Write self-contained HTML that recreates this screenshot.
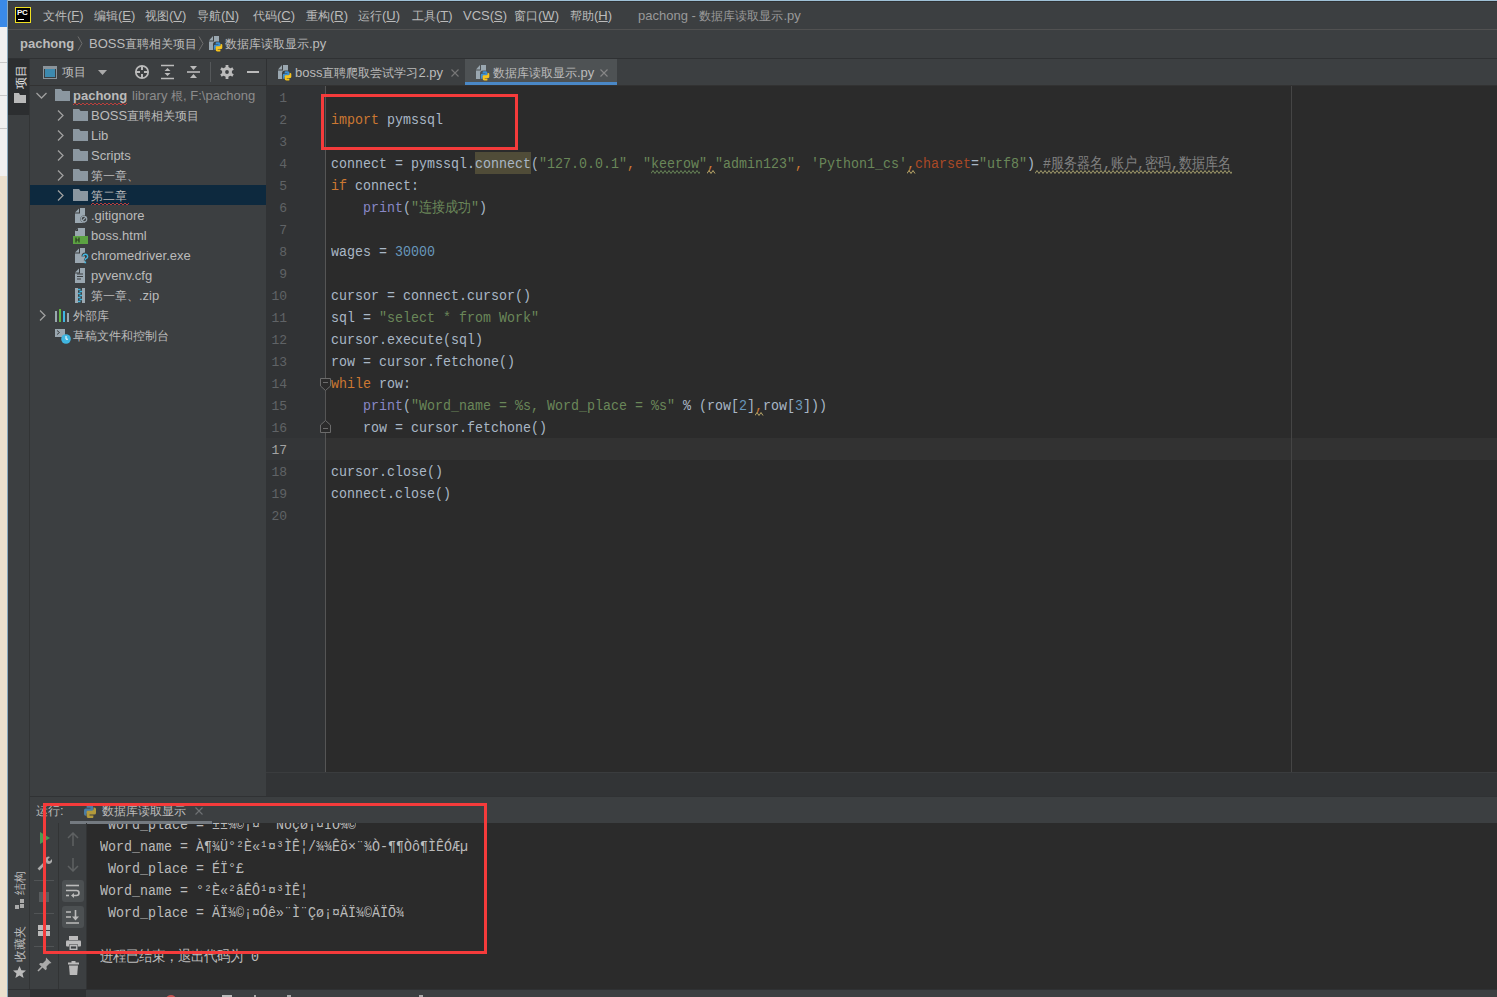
<!DOCTYPE html>
<html><head><meta charset="utf-8">
<style>
*{margin:0;padding:0;box-sizing:border-box}
html,body{width:1497px;height:997px;overflow:hidden;background:#3c3f41}
body{position:relative;font-family:"Liberation Sans",sans-serif;font-size:13px;color:#bbbbbb}
.a{position:absolute}
.t{position:absolute;white-space:pre;line-height:14px}
.cj{display:inline-block;font-size:12px;overflow:visible;white-space:nowrap}
.m{font-family:"Liberation Mono",monospace;font-size:13.3333px;white-space:pre;position:absolute;line-height:22px}
.m .cj{font-size:13px}
.kw{color:#cc7832}.st{color:#6a8759}.nu{color:#6897bb}.bi{color:#8888c6}.cm{color:#808080}.ka{color:#aa4926}.df{color:#a9b7c6}
</style></head><body>

<div class="a" style="left:0px;top:0px;width:8px;height:997px;background:#ebe0cd;"></div>
<div class="a" style="left:0px;top:0px;width:8px;height:176px;background:#f0f0f0;"></div>
<div class="a" style="left:0px;top:0px;width:7px;height:27px;background:#3a8ae8;"></div>
<div class="a" style="left:0px;top:62px;width:7px;height:1px;background:#c8c8c8;"></div>
<div class="a" style="left:0px;top:95px;width:7px;height:1px;background:#c8c8c8;"></div>
<div class="a" style="left:0px;top:128px;width:7px;height:1px;background:#c8c8c8;"></div>
<div class="a" style="left:8px;top:0px;width:1489px;height:997px;background:#3c3f41;"></div>
<div class="a" style="left:8px;top:0px;width:1489px;height:1px;background:#9fc1d6;"></div>
<div class="a" style="left:8px;top:1px;width:1489px;height:1px;background:#2f3133;"></div>
<div class="a" style="left:7px;top:0px;width:1px;height:997px;background:#8aa9bd;"></div>
<div class="a" style="left:8px;top:29px;width:1489px;height:1px;background:#515151;"></div>
<div class="a" style="left:15px;top:7px;width:16px;height:16px;background:#000;border:1px solid #f0e020"></div>
<div class="t" style="left:17px;top:9px;color:#fff;font-weight:bold;font-size:8px;line-height:8px;letter-spacing:-0.3px">PC</div>
<div class="a" style="left:18px;top:19px;width:6px;height:1px;background:#fff;"></div>
<div class="t" style="left:43px;top:9px;"><span class="cj" style="width:24px">文件</span>(<u>F</u>)</div>
<div class="t" style="left:94px;top:9px;"><span class="cj" style="width:24px">编辑</span>(<u>E</u>)</div>
<div class="t" style="left:145px;top:9px;"><span class="cj" style="width:24px">视图</span>(<u>V</u>)</div>
<div class="t" style="left:197px;top:9px;"><span class="cj" style="width:24px">导航</span>(<u>N</u>)</div>
<div class="t" style="left:253px;top:9px;"><span class="cj" style="width:24px">代码</span>(<u>C</u>)</div>
<div class="t" style="left:306px;top:9px;"><span class="cj" style="width:24px">重构</span>(<u>R</u>)</div>
<div class="t" style="left:358px;top:9px;"><span class="cj" style="width:24px">运行</span>(<u>U</u>)</div>
<div class="t" style="left:412px;top:9px;"><span class="cj" style="width:24px">工具</span>(<u>T</u>)</div>
<div class="t" style="left:463px;top:9px;">VCS(<u>S</u>)</div>
<div class="t" style="left:514px;top:9px;"><span class="cj" style="width:24px">窗口</span>(<u>W</u>)</div>
<div class="t" style="left:570px;top:9px;"><span class="cj" style="width:24px">帮助</span>(<u>H</u>)</div>
<div class="t" style="left:638px;top:9px;color:#999">pachong - <span class="cj" style="width:84px">数据库读取显示</span>.py</div>
<div class="a" style="left:8px;top:58px;width:1489px;height:1px;background:#2f3133;"></div>
<div class="t" style="left:20px;top:37px;font-weight:bold">pachong</div>
<svg class="a" style="left:77px;top:36px" width="6" height="15"><path d="M1 0.5l4 7-4 7" fill="none" stroke="#6e6e6e" stroke-width="1"/></svg>
<div class="t" style="left:89px;top:37px;">BOSS<span class="cj" style="width:72px">直聘相关项目</span></div>
<svg class="a" style="left:198px;top:36px" width="6" height="15"><path d="M1 0.5l4 7-4 7" fill="none" stroke="#6e6e6e" stroke-width="1"/></svg>
<svg class="a" style="left:209px;top:36px" width="15" height="16"><path d="M0 4.5h4V0z" fill="#9aa7b0"/><path d="M5 0h5v14H0V5.5h5z" fill="#9aa7b0"/><rect x="4" y="5.6" width="10.5" height="9.8" rx="3" fill="#3c3f41"/><g transform="translate(4.8 6.2) scale(0.85)"><path d="M3.2 0h2.6a2 2 0 0 1 2 2v3.2a1 1 0 0 1-1 1H3.6a1.6 1.6 0 0 0-1.6 1.6V9H1.4A1.4 1.4 0 0 1 0 7.6V4.4A1.4 1.4 0 0 1 1.4 3h4V2.3H2.2V1a1 1 0 0 1 1-1z" fill="#3d8fd1"/><path d="M3.2 0h2.6a2 2 0 0 1 2 2v3.2a1 1 0 0 1-1 1H3.6a1.6 1.6 0 0 0-1.6 1.6V9H1.4A1.4 1.4 0 0 1 0 7.6V4.4A1.4 1.4 0 0 1 1.4 3h4V2.3H2.2V1a1 1 0 0 1 1-1z" fill="#f6c31c" transform="rotate(180 5 5.5)"/></g></svg>
<div class="t" style="left:225px;top:37px;"><span class="cj" style="width:84px">数据库读取显示</span>.py</div>
<div class="a" style="left:8px;top:59px;width:21px;height:930px;background:#3c3f41;"></div>
<div class="a" style="left:8px;top:59px;width:21px;height:56px;background:#2c2e30;"></div>
<div class="a" style="left:29px;top:59px;width:1px;height:930px;background:#323435;"></div>
<div class="t" style="left:14px;top:89px;transform-origin:0 0;transform:rotate(-90deg);color:#e8e8e8"><span class="cj" style="width:24px">项目</span></div>
<svg class="a" style="left:14px;top:93px" width="12" height="10"><path d="M0 0h5l1 2h6v8H0z" fill="#b9b9b9"/></svg>
<div class="t" style="left:13px;top:895px;transform-origin:0 0;transform:rotate(-90deg);color:#bbb"><span class="cj" style="width:24px">结构</span></div>
<svg class="a" style="left:15px;top:899px" width="10" height="10"><rect x="0" y="6" width="4" height="4" fill="#aaa"/><rect x="5" y="0" width="4" height="4" fill="#aaa"/><rect x="5" y="5" width="4" height="4" fill="#aaa"/></svg>
<div class="t" style="left:13px;top:962px;transform-origin:0 0;transform:rotate(-90deg);color:#bbb"><span class="cj" style="width:33px">收藏夹</span></div>
<svg class="a" style="left:13px;top:966px" width="13" height="13"><path d="M6.5 0l1.9 4.2 4.6.4-3.5 3 1.1 4.4-4.1-2.4-4.1 2.4 1.1-4.4L0 4.6l4.6-.4z" fill="#bbb"/></svg>
<div class="a" style="left:30px;top:85px;width:236px;height:1px;background:#323232;"></div>
<div class="a" style="left:266px;top:59px;width:1px;height:738px;background:#2f3133;"></div>
<svg class="a" style="left:43px;top:66px" width="14" height="13"><rect x="0.5" y="0.5" width="13" height="12" fill="none" stroke="#8a949b"/><rect x="2" y="3" width="10" height="8" fill="#3d8aaf"/><rect x="1" y="1" width="12" height="2" fill="#8a949b"/></svg>
<div class="t" style="left:62px;top:65px;"><span class="cj" style="width:24px">项目</span></div>
<svg class="a" style="left:98px;top:70px" width="10" height="6"><path d="M0 0h9L4.5 5z" fill="#aaa"/></svg>
<svg class="a" style="left:134px;top:64px" width="16" height="16"><circle cx="8" cy="8" r="6.2" fill="none" stroke="#bbb" stroke-width="1.7"/><path d="M8 2v4M8 10v4M2 8h4M10 8h4" stroke="#bbb" stroke-width="2"/></svg>
<svg class="a" style="left:161px;top:64px" width="14" height="16"><path d="M0 1.5h13M0 14.5h13" stroke="#bbb" stroke-width="1.6"/><path d="M6.5 4l3 3h-6zM6.5 12l3-3h-6z" fill="#bbb"/></svg>
<svg class="a" style="left:187px;top:65px" width="14" height="14"><path d="M0 7h13" stroke="#bbb" stroke-width="1.6"/><path d="M3 1h7l-3.5 4zM3 13h7l-3.5-4z" fill="#bbb"/></svg>
<div class="a" style="left:210px;top:62px;width:1px;height:20px;background:#55585a;"></div>
<svg class="a" style="left:220px;top:65px" width="14" height="14"><g fill="#bbb"><circle cx="7" cy="7" r="5"/><rect x="5.6" y="0" width="2.8" height="3.5" transform="rotate(0 7 7)"/><rect x="5.6" y="0" width="2.8" height="3.5" transform="rotate(60 7 7)"/><rect x="5.6" y="0" width="2.8" height="3.5" transform="rotate(120 7 7)"/><rect x="5.6" y="0" width="2.8" height="3.5" transform="rotate(180 7 7)"/><rect x="5.6" y="0" width="2.8" height="3.5" transform="rotate(240 7 7)"/><rect x="5.6" y="0" width="2.8" height="3.5" transform="rotate(300 7 7)"/></g><circle cx="7" cy="7" r="1.9" fill="#3c3f41"/></svg>
<div class="a" style="left:247px;top:71px;width:12px;height:2px;background:#bbb;"></div>
<div class="a" style="left:30px;top:185px;width:236px;height:20px;background:#0d293e;"></div>
<svg class="a" style="left:36px;top:92px" width="11" height="7"><path d="M0.5 1l5 5 5-5" fill="none" stroke="#a0a0a0" stroke-width="1.3"/></svg>
<svg class="a" style="left:55px;top:89px" width="15" height="12"><path d="M0 0h6l1.5 2H15v10H0z" fill="#8b97a0"/></svg>
<div class="t" style="left:73px;top:89px;font-weight:bold">pachong</div>
<svg class="a" style="left:73px;top:102px" width="54" height="4"><path d="M0 3 l2-2 2 2 l2-2 2 2 l2-2 2 2 l2-2 2 2 l2-2 2 2 l2-2 2 2 l2-2 2 2 l2-2 2 2 l2-2 2 2 l2-2 2 2 l2-2 2 2 l2-2 2 2 l2-2 2 2 l2-2 2 2" fill="none" stroke="#bc3f3c" stroke-width="1"/></svg>
<div class="t" style="left:132px;top:89px;color:#8c8c8c">library <span class="cj" style="width:12px">根</span>, F:\pachong</div>
<svg class="a" style="left:57px;top:110px" width="7" height="11"><path d="M1 0.5l5 5-5 5" fill="none" stroke="#a0a0a0" stroke-width="1.3"/></svg>
<svg class="a" style="left:73px;top:109px" width="15" height="12"><path d="M0 0h6l1.5 2H15v10H0z" fill="#8b97a0"/></svg>
<div class="t" style="left:91px;top:109px;">BOSS<span class="cj" style="width:72px">直聘相关项目</span></div>
<svg class="a" style="left:57px;top:130px" width="7" height="11"><path d="M1 0.5l5 5-5 5" fill="none" stroke="#a0a0a0" stroke-width="1.3"/></svg>
<svg class="a" style="left:73px;top:129px" width="15" height="12"><path d="M0 0h6l1.5 2H15v10H0z" fill="#8b97a0"/></svg>
<div class="t" style="left:91px;top:129px;">Lib</div>
<svg class="a" style="left:57px;top:150px" width="7" height="11"><path d="M1 0.5l5 5-5 5" fill="none" stroke="#a0a0a0" stroke-width="1.3"/></svg>
<svg class="a" style="left:73px;top:149px" width="15" height="12"><path d="M0 0h6l1.5 2H15v10H0z" fill="#8b97a0"/></svg>
<div class="t" style="left:91px;top:149px;">Scripts</div>
<svg class="a" style="left:57px;top:170px" width="7" height="11"><path d="M1 0.5l5 5-5 5" fill="none" stroke="#a0a0a0" stroke-width="1.3"/></svg>
<svg class="a" style="left:73px;top:169px" width="15" height="12"><path d="M0 0h6l1.5 2H15v10H0z" fill="#8b97a0"/></svg>
<div class="t" style="left:91px;top:169px;"><span class="cj" style="width:48px">第一章、</span></div>
<svg class="a" style="left:57px;top:190px" width="7" height="11"><path d="M1 0.5l5 5-5 5" fill="none" stroke="#a0a0a0" stroke-width="1.3"/></svg>
<svg class="a" style="left:73px;top:189px" width="15" height="12"><path d="M0 0h6l1.5 2H15v10H0z" fill="#8b97a0"/></svg>
<div class="t" style="left:91px;top:189px;"><span class="cj" style="width:36px">第二章</span></div>
<svg class="a" style="left:91px;top:202px" width="38" height="4"><path d="M0 3 l2-2 2 2 l2-2 2 2 l2-2 2 2 l2-2 2 2 l2-2 2 2 l2-2 2 2 l2-2 2 2 l2-2 2 2 l2-2 2 2 l2-2 2 2" fill="none" stroke="#bc3f3c" stroke-width="1"/></svg>
<svg class="a" style="left:75px;top:208px" width="13" height="16"><path d="M0 4.5h4V0.5z" fill="#9aa7b0"/><path d="M5 0h5v15H0V5.5h5z" fill="#9aa7b0"/><circle cx="9" cy="11" r="3.6" fill="#3c3f41"/><circle cx="9" cy="11" r="2.8" fill="none" stroke="#9aa7b0" stroke-width="1.1"/><path d="M7 13l4-4" stroke="#9aa7b0" stroke-width="1.1"/></svg>
<div class="t" style="left:91px;top:209px;">.gitignore</div>
<svg class="a" style="left:73px;top:228px" width="16" height="16"><path d="M5 0h7v8H2V3z" fill="#9aa7b0"/><path d="M2 3h3V0z" fill="#3c3f41"/><rect x="0" y="8" width="15" height="8" fill="#62b543" opacity=".85"/><path d="M3 9.5v5M6 9.5v5M3 12h3" stroke="#2b3a22" stroke-width="1.2"/></svg>
<div class="t" style="left:91px;top:229px;">boss.html</div>
<svg class="a" style="left:75px;top:248px" width="14" height="17"><path d="M0 4.5h4V0.5z" fill="#9aa7b0"/><path d="M5 0h5v15H0V5.5h5z" fill="#9aa7b0"/><path d="M8 8.5a2.5 2.5 0 1 1 3.2 2.4c-.7.3-.9.8-.9 1.6" fill="none" stroke="#3c3f41" stroke-width="3"/><path d="M8 8.5a2.3 2.3 0 1 1 3 2.2c-.7.3-.8.7-.8 1.5" fill="none" stroke="#40b6e0" stroke-width="1.4"/><rect x="9.5" y="13.5" width="1.6" height="1.8" fill="#40b6e0"/></svg>
<div class="t" style="left:91px;top:249px;">chromedriver.exe</div>
<svg class="a" style="left:75px;top:268px" width="13" height="16"><path d="M0 4.5h4V0.5z" fill="#9aa7b0"/><path d="M5 0h5v15H0V5.5h5z" fill="#9aa7b0"/><path d="M2 6h6M2 8.5h6M2 11h4" stroke="#3c3f41" stroke-width="1.2"/></svg>
<div class="t" style="left:91px;top:269px;">pyvenv.cfg</div>
<svg class="a" style="left:75px;top:288px" width="13" height="16"><path d="M0 0h10v15H0z" fill="#9aa7b0"/><rect x="3" y="0" width="4" height="15" fill="#3c3f41"/><path d="M3 1.5h2.5M4.5 3.5h2.5M3 5.5h2.5M4.5 7.5h2.5M3 9.5h2.5M4.5 11.5h2.5M3 13.5h2.5" stroke="#40b6e0" stroke-width="1.4"/></svg>
<div class="t" style="left:91px;top:289px;"><span class="cj" style="width:48px">第一章、</span>.zip</div>
<svg class="a" style="left:39px;top:310px" width="7" height="11"><path d="M1 0.5l5 5-5 5" fill="none" stroke="#a0a0a0" stroke-width="1.3"/></svg>
<svg class="a" style="left:55px;top:309px" width="15" height="13"><rect x="0" y="2" width="2" height="11" fill="#9aa7b0"/><rect x="4" y="0" width="2" height="13" fill="#62b543"/><rect x="8" y="2" width="2" height="11" fill="#40b6e0"/><rect x="12" y="4" width="2" height="9" fill="#9aa7b0"/></svg>
<div class="t" style="left:73px;top:309px;"><span class="cj" style="width:36px">外部库</span></div>
<svg class="a" style="left:55px;top:329px" width="16" height="15"><rect x="0" y="0" width="10" height="8" fill="#9aa7b0"/><path d="M2 1.5l2.5 2L2 5.5" fill="none" stroke="#3c3f41" stroke-width="1"/><circle cx="11" cy="10" r="4.8" fill="#40b6e0"/><path d="M11 7v3.2h2" fill="none" stroke="#fff" stroke-width="1"/></svg>
<div class="t" style="left:73px;top:329px;"><span class="cj" style="width:96px">草稿文件和控制台</span></div>
<div class="a" style="left:267px;top:85px;width:1230px;height:1px;background:#323232;"></div>
<svg class="a" style="left:278px;top:65px" width="15" height="16"><path d="M0 4.5h4V0z" fill="#9aa7b0"/><path d="M5 0h5v14H0V5.5h5z" fill="#9aa7b0"/><rect x="4" y="5.6" width="10.5" height="9.8" rx="3" fill="#3c3f41"/><g transform="translate(4.8 6.2) scale(0.85)"><path d="M3.2 0h2.6a2 2 0 0 1 2 2v3.2a1 1 0 0 1-1 1H3.6a1.6 1.6 0 0 0-1.6 1.6V9H1.4A1.4 1.4 0 0 1 0 7.6V4.4A1.4 1.4 0 0 1 1.4 3h4V2.3H2.2V1a1 1 0 0 1 1-1z" fill="#3d8fd1"/><path d="M3.2 0h2.6a2 2 0 0 1 2 2v3.2a1 1 0 0 1-1 1H3.6a1.6 1.6 0 0 0-1.6 1.6V9H1.4A1.4 1.4 0 0 1 0 7.6V4.4A1.4 1.4 0 0 1 1.4 3h4V2.3H2.2V1a1 1 0 0 1 1-1z" fill="#f6c31c" transform="rotate(180 5 5.5)"/></g></svg>
<div class="t" style="left:295px;top:66px;">boss<span class="cj" style="width:96px">直聘爬取尝试学习</span>2.py</div>
<svg class="a" style="left:451px;top:69px" width="8" height="8"><path d="M0.5 0.5l7 7M7.5 0.5l-7 7" stroke="#777" stroke-width="1.1"/></svg>
<div class="a" style="left:465px;top:59px;width:152px;height:26px;background:#4e5254;"></div>
<div class="a" style="left:465px;top:82px;width:152px;height:3px;background:#4a88c7;"></div>
<svg class="a" style="left:476px;top:65px" width="15" height="16"><path d="M0 4.5h4V0z" fill="#9aa7b0"/><path d="M5 0h5v14H0V5.5h5z" fill="#9aa7b0"/><rect x="4" y="5.6" width="10.5" height="9.8" rx="3" fill="#4e5254"/><g transform="translate(4.8 6.2) scale(0.85)"><path d="M3.2 0h2.6a2 2 0 0 1 2 2v3.2a1 1 0 0 1-1 1H3.6a1.6 1.6 0 0 0-1.6 1.6V9H1.4A1.4 1.4 0 0 1 0 7.6V4.4A1.4 1.4 0 0 1 1.4 3h4V2.3H2.2V1a1 1 0 0 1 1-1z" fill="#3d8fd1"/><path d="M3.2 0h2.6a2 2 0 0 1 2 2v3.2a1 1 0 0 1-1 1H3.6a1.6 1.6 0 0 0-1.6 1.6V9H1.4A1.4 1.4 0 0 1 0 7.6V4.4A1.4 1.4 0 0 1 1.4 3h4V2.3H2.2V1a1 1 0 0 1 1-1z" fill="#f6c31c" transform="rotate(180 5 5.5)"/></g></svg>
<div class="t" style="left:493px;top:66px;"><span class="cj" style="width:84px">数据库读取显示</span>.py</div>
<svg class="a" style="left:600px;top:69px" width="8" height="8"><path d="M0.5 0.5l7 7M7.5 0.5l-7 7" stroke="#888" stroke-width="1.1"/></svg>
<div class="a" style="left:266px;top:86px;width:60px;height:686px;background:#313335;"></div>
<div class="a" style="left:326px;top:86px;width:1171px;height:686px;background:#2b2b2b;"></div>
<div class="a" style="left:266px;top:438px;width:60px;height:22px;background:#343638;"></div>
<div class="a" style="left:326px;top:438px;width:1171px;height:22px;background:#323232;"></div>
<div class="a" style="left:325px;top:86px;width:1px;height:686px;background:#555555;"></div>
<div class="a" style="left:475px;top:152px;width:56px;height:22px;background:#504c38;"></div>
<div class="a" style="left:1291px;top:86px;width:1px;height:686px;background:#454545;"></div>
<div class="a" style="left:266px;top:772px;width:1231px;height:1px;background:#3a3c3e;"></div>
<div class="a" style="left:266px;top:773px;width:1231px;height:23px;background:#323436;"></div>
<div class="m" style="left:246px;top:88px;width:41px;text-align:right;color:#606366;font-size:13px;letter-spacing:0">1</div>
<div class="m" style="left:246px;top:110px;width:41px;text-align:right;color:#606366;font-size:13px;letter-spacing:0">2</div>
<div class="m" style="left:246px;top:132px;width:41px;text-align:right;color:#606366;font-size:13px;letter-spacing:0">3</div>
<div class="m" style="left:246px;top:154px;width:41px;text-align:right;color:#606366;font-size:13px;letter-spacing:0">4</div>
<div class="m" style="left:246px;top:176px;width:41px;text-align:right;color:#606366;font-size:13px;letter-spacing:0">5</div>
<div class="m" style="left:246px;top:198px;width:41px;text-align:right;color:#606366;font-size:13px;letter-spacing:0">6</div>
<div class="m" style="left:246px;top:220px;width:41px;text-align:right;color:#606366;font-size:13px;letter-spacing:0">7</div>
<div class="m" style="left:246px;top:242px;width:41px;text-align:right;color:#606366;font-size:13px;letter-spacing:0">8</div>
<div class="m" style="left:246px;top:264px;width:41px;text-align:right;color:#606366;font-size:13px;letter-spacing:0">9</div>
<div class="m" style="left:246px;top:286px;width:41px;text-align:right;color:#606366;font-size:13px;letter-spacing:0">10</div>
<div class="m" style="left:246px;top:308px;width:41px;text-align:right;color:#606366;font-size:13px;letter-spacing:0">11</div>
<div class="m" style="left:246px;top:330px;width:41px;text-align:right;color:#606366;font-size:13px;letter-spacing:0">12</div>
<div class="m" style="left:246px;top:352px;width:41px;text-align:right;color:#606366;font-size:13px;letter-spacing:0">13</div>
<div class="m" style="left:246px;top:374px;width:41px;text-align:right;color:#606366;font-size:13px;letter-spacing:0">14</div>
<div class="m" style="left:246px;top:396px;width:41px;text-align:right;color:#606366;font-size:13px;letter-spacing:0">15</div>
<div class="m" style="left:246px;top:418px;width:41px;text-align:right;color:#606366;font-size:13px;letter-spacing:0">16</div>
<div class="m" style="left:246px;top:440px;width:41px;text-align:right;color:#a4a3a3;font-size:13px;letter-spacing:0">17</div>
<div class="m" style="left:246px;top:462px;width:41px;text-align:right;color:#606366;font-size:13px;letter-spacing:0">18</div>
<div class="m" style="left:246px;top:484px;width:41px;text-align:right;color:#606366;font-size:13px;letter-spacing:0">19</div>
<div class="m" style="left:246px;top:506px;width:41px;text-align:right;color:#606366;font-size:13px;letter-spacing:0">20</div>
<svg class="a" style="left:320px;top:378px" width="11" height="13"><path d="M0.5 0.5h10v7.5l-5 4.5-5-4.5z" fill="#2b2b2b" stroke="#6b6b6b"/><path d="M3 4.5h5" stroke="#6b6b6b"/></svg>
<svg class="a" style="left:320px;top:420px" width="11" height="13"><path d="M0.5 12.5h10V5L5.5 0.5 0.5 5z" fill="#2b2b2b" stroke="#6b6b6b"/><path d="M3 8.5h5" stroke="#6b6b6b"/></svg>
<div class="m df" style="left:331px;top:110px;transform-origin:0 13.5px;transform:scaleY(1.15)"><span class="kw">import</span> pymssql</div>
<div class="m df" style="left:331px;top:154px;transform-origin:0 13.5px;transform:scaleY(1.15)">connect = pymssql.connect(<span class="st">"127.0.0.1"</span><span class="kw">, </span><span class="st">"keerow"</span><span class="kw">,</span><span class="st">"admin123"</span><span class="kw">, </span><span class="st">'Python1_cs'</span><span class="kw">,</span><span class="ka">charset</span>=<span class="st">"utf8"</span>) <span class="cm">#<span class="cj" style="width:52px">服务器名</span>,<span class="cj" style="width:26px">账户</span>,<span class="cj" style="width:26px">密码</span>,<span class="cj" style="width:52px">数据库名</span></span></div>
<div class="m df" style="left:331px;top:176px;transform-origin:0 13.5px;transform:scaleY(1.15)"><span class="kw">if</span> connect:</div>
<div class="m df" style="left:331px;top:198px;transform-origin:0 13.5px;transform:scaleY(1.15)">    <span class="bi">print</span>(<span class="st">"<span class="cj" style="width:52px">连接成功</span>"</span>)</div>
<div class="m df" style="left:331px;top:242px;transform-origin:0 13.5px;transform:scaleY(1.15)">wages = <span class="nu">30000</span></div>
<div class="m df" style="left:331px;top:286px;transform-origin:0 13.5px;transform:scaleY(1.15)">cursor = connect.cursor()</div>
<div class="m df" style="left:331px;top:308px;transform-origin:0 13.5px;transform:scaleY(1.15)">sql = <span class="st">"select * from Work"</span></div>
<div class="m df" style="left:331px;top:330px;transform-origin:0 13.5px;transform:scaleY(1.15)">cursor.execute(sql)</div>
<div class="m df" style="left:331px;top:352px;transform-origin:0 13.5px;transform:scaleY(1.15)">row = cursor.fetchone()</div>
<div class="m df" style="left:331px;top:374px;transform-origin:0 13.5px;transform:scaleY(1.15)"><span class="kw">while</span> row:</div>
<div class="m df" style="left:331px;top:396px;transform-origin:0 13.5px;transform:scaleY(1.15)">    <span class="bi">print</span>(<span class="st">"Word_name = %s, Word_place = %s"</span> % (row[<span class="nu">2</span>]<span class="kw">,</span>row[<span class="nu">3</span>]))</div>
<div class="m df" style="left:331px;top:418px;transform-origin:0 13.5px;transform:scaleY(1.15)">    row = cursor.fetchone()</div>
<div class="m df" style="left:331px;top:462px;transform-origin:0 13.5px;transform:scaleY(1.15)">cursor.close()</div>
<div class="m df" style="left:331px;top:484px;transform-origin:0 13.5px;transform:scaleY(1.15)">connect.close()</div>
<svg class="a" style="left:651px;top:170px" width="49" height="4"><path d="M0 3.5 l2-3 2 3 l2-3 2 3 l2-3 2 3 l2-3 2 3 l2-3 2 3 l2-3 2 3 l2-3 2 3 l2-3 2 3 l2-3 2 3 l2-3 2 3 l2-3 2 3 l2-3 2 3 l2-3 2 3" fill="none" stroke="#6a8759" stroke-width="1"/></svg>
<svg class="a" style="left:1035px;top:170px" width="197" height="4"><path d="M0 3.5 l2-3 2 3 l2-3 2 3 l2-3 2 3 l2-3 2 3 l2-3 2 3 l2-3 2 3 l2-3 2 3 l2-3 2 3 l2-3 2 3 l2-3 2 3 l2-3 2 3 l2-3 2 3 l2-3 2 3 l2-3 2 3 l2-3 2 3 l2-3 2 3 l2-3 2 3 l2-3 2 3 l2-3 2 3 l2-3 2 3 l2-3 2 3 l2-3 2 3 l2-3 2 3 l2-3 2 3 l2-3 2 3 l2-3 2 3 l2-3 2 3 l2-3 2 3 l2-3 2 3 l2-3 2 3 l2-3 2 3 l2-3 2 3 l2-3 2 3 l2-3 2 3 l2-3 2 3 l2-3 2 3 l2-3 2 3 l2-3 2 3 l2-3 2 3 l2-3 2 3 l2-3 2 3 l2-3 2 3 l2-3 2 3 l2-3 2 3 l2-3 2 3 l2-3 2 3 l2-3 2 3 l2-3 2 3 l2-3 2 3 l2-3 2 3" fill="none" stroke="#a39d6d" stroke-width="1"/></svg>
<svg class="a" style="left:707px;top:170px" width="9" height="4"><path d="M0 3.5l2-3 2 3 2-3 2 3" fill="none" stroke="#bba86a" stroke-width="1"/></svg>
<svg class="a" style="left:907px;top:170px" width="9" height="4"><path d="M0 3.5l2-3 2 3 2-3 2 3" fill="none" stroke="#bba86a" stroke-width="1"/></svg>
<svg class="a" style="left:755px;top:412px" width="9" height="4"><path d="M0 3.5l2-3 2 3 2-3 2 3" fill="none" stroke="#bba86a" stroke-width="1"/></svg>
<div class="a" style="left:321px;top:94px;width:197px;height:56px;background:transparent;border:3px solid #f53b3b"></div>
<div class="a" style="left:30px;top:796px;width:1467px;height:1px;background:#303234;"></div>
<div class="a" style="left:30px;top:797px;width:1467px;height:26px;background:#3c3f41;"></div>
<div class="t" style="left:36px;top:804px;"><span class="cj" style="width:24px">运行</span>:</div>
<svg class="a" style="left:83px;top:803px" width="15" height="15"><g transform="translate(1 2) scale(1.2)"><path d="M3.2 0h2.6a2 2 0 0 1 2 2v3.2a1 1 0 0 1-1 1H3.6a1.6 1.6 0 0 0-1.6 1.6V9H1.4A1.4 1.4 0 0 1 0 7.6V4.4A1.4 1.4 0 0 1 1.4 3h4V2.3H2.2V1a1 1 0 0 1 1-1z" fill="#4a7ca3"/><path d="M3.2 0h2.6a2 2 0 0 1 2 2v3.2a1 1 0 0 1-1 1H3.6a1.6 1.6 0 0 0-1.6 1.6V9H1.4A1.4 1.4 0 0 1 0 7.6V4.4A1.4 1.4 0 0 1 1.4 3h4V2.3H2.2V1a1 1 0 0 1 1-1z" fill="#b39a3c" transform="rotate(180 5 5.5)"/></g></svg>
<div class="t" style="left:102px;top:804px;"><span class="cj" style="width:84px">数据库读取显示</span></div>
<svg class="a" style="left:195px;top:807px" width="8" height="8"><path d="M0.5 0.5l7 7M7.5 0.5l-7 7" stroke="#6f7274" stroke-width="1.1"/></svg>
<div class="a" style="left:87px;top:823px;width:1410px;height:166px;background:#2b2b2b;overflow:hidden">
<div class="m" style="left:13px;top:-8.5px;color:#bbbbbb;transform-origin:0 13.5px;transform:scaleY(1.12)"> Word_place = ±±¾©¡¤ ¨Nöçø¡¤ÏÖ¾©</div>
<div class="m" style="left:13px;top:13.5px;color:#bbbbbb;transform-origin:0 13.5px;transform:scaleY(1.12)">Word_name = À¶¾Ü°²È«¹¤³ÌÊ¦/¾¾Êõ×¨¾Ò-¶¶Òô¶ÌÊÓÆµ</div>
<div class="m" style="left:13px;top:35.5px;color:#bbbbbb;transform-origin:0 13.5px;transform:scaleY(1.12)"> Word_place = ÉÏ°£</div>
<div class="m" style="left:13px;top:57.5px;color:#bbbbbb;transform-origin:0 13.5px;transform:scaleY(1.12)">Word_name = °²È«²âÊÔ¹¤³ÌÊ¦</div>
<div class="m" style="left:13px;top:79.5px;color:#bbbbbb;transform-origin:0 13.5px;transform:scaleY(1.12)"> Word_place = ÄÏ¾©¡¤Óê»¨Ì¨Çø¡¤ÄÏ¾©ÄÏÕ¾</div>
<div class="m" style="left:13px;top:123.5px;color:#bbbbbb;transform-origin:0 13.5px;transform:scaleY(1.12)"><span class="cj" style="width:143px">进程已结束，退出代码为</span> 0</div>
</div>
<div class="a" style="left:70px;top:821px;width:142px;height:3px;background:#747a80;"></div>
<div class="a" style="left:58px;top:823px;width:1px;height:166px;background:#323435;"></div>
<div class="a" style="left:86px;top:823px;width:1px;height:166px;background:#323435;"></div>
<svg class="a" style="left:40px;top:832px" width="10" height="12"><path d="M0 0l10 6-10 6z" fill="#499c54"/></svg>
<svg class="a" style="left:37px;top:856px" width="15" height="15"><path d="M1.5 13.5l7-7" stroke="#aaa" stroke-width="2.6"/><path d="M8 3.5a3.5 3.5 0 0 1 5-2.5l-2.2 2.2.5 1.5 1.5.5L15 3a3.5 3.5 0 0 1-5.5 4z" fill="#aaa"/></svg>
<div class="a" style="left:34px;top:880px;width:20px;height:1px;background:#515456;"></div>
<div class="a" style="left:34px;top:913px;width:20px;height:1px;background:#515456;"></div>
<div class="a" style="left:34px;top:946px;width:20px;height:1px;background:#515456;"></div>
<div class="a" style="left:39px;top:892px;width:10px;height:10px;background:#595c5e;"></div>
<svg class="a" style="left:38px;top:925px" width="13" height="11"><rect x="0" y="0" width="5.5" height="5" fill="#bbb"/><rect x="6.5" y="0" width="5.5" height="5" fill="#bbb"/><rect x="0" y="6" width="5.5" height="5" fill="#bbb"/><rect x="6.5" y="6" width="5.5" height="5" fill="#bbb"/></svg>
<svg class="a" style="left:37px;top:957px" width="15" height="15"><path d="M1 14l5-5" stroke="#aaa" stroke-width="1.6"/><path d="M9 0.5l5.5 5.5-2 .5-3 3 .3 2.5-1.3 1.3L2 7.3 3.3 6l2.5.3 3-3z" fill="#aaa"/></svg>
<svg class="a" style="left:67px;top:832px" width="12" height="14"><path d="M6 1v13M1 6l5-5 5 5" fill="none" stroke="#5e6162" stroke-width="1.5"/></svg>
<svg class="a" style="left:67px;top:858px" width="12" height="14"><path d="M6 0v13M1 8l5 5 5-5" fill="none" stroke="#5e6162" stroke-width="1.5"/></svg>
<div class="a" style="left:62px;top:880px;width:22px;height:22px;background:#4c5052;border-radius:3px"></div>
<div class="a" style="left:62px;top:906px;width:22px;height:22px;background:#4c5052;border-radius:3px"></div>
<svg class="a" style="left:66px;top:884px" width="14" height="14"><path d="M0 1.5h13" stroke="#bbb" stroke-width="1.6"/><path d="M0 6.5h10.5a2.5 2.5 0 0 1 0 5H7" fill="none" stroke="#bbb" stroke-width="1.6"/><path d="M8 9l-3 2.5 3 2.5z" fill="#bbb"/><path d="M0 11.5h3" stroke="#bbb" stroke-width="1.6"/></svg>
<svg class="a" style="left:66px;top:910px" width="14" height="14"><path d="M0 2h5M0 7h5M0 13h13" stroke="#bbb" stroke-width="1.6"/><path d="M9.5 0v8" stroke="#bbb" stroke-width="1.6"/><path d="M6 6.5l3.5 4 3.5-4z" fill="#bbb"/></svg>
<svg class="a" style="left:66px;top:936px" width="15" height="15"><rect x="3" y="0" width="9" height="4" fill="#bbb"/><rect x="0" y="4.5" width="15" height="6" rx="1" fill="#bbb"/><rect x="3" y="8.5" width="9" height="6" fill="#3c3f41"/><rect x="4.2" y="9.7" width="6.6" height="3.6" fill="none" stroke="#bbb" stroke-width="1.4"/></svg>
<svg class="a" style="left:68px;top:961px" width="11" height="14"><rect x="0" y="1.5" width="11" height="2" fill="#bbb"/><rect x="3.5" y="0" width="4" height="2" fill="#bbb"/><path d="M1 4.5h9l-.8 9.5H1.8z" fill="#bbb"/></svg>
<div class="a" style="left:8px;top:989px;width:1489px;height:1px;background:#2f3133;"></div>
<div class="a" style="left:8px;top:990px;width:1489px;height:7px;background:#3c3f41;"></div>
<div class="a" style="left:30px;top:990px;width:56px;height:7px;background:#2f3133;"></div>
<svg class="a" style="left:166px;top:994px" width="10" height="3"><ellipse cx="5" cy="5" rx="5" ry="4" fill="#c75450"/></svg>
<div class="a" style="left:222px;top:995px;width:10px;height:2px;background:#bbb;"></div>
<div class="a" style="left:254px;top:995px;width:2px;height:2px;background:#aaa;"></div>
<div class="a" style="left:287px;top:995px;width:4px;height:2px;background:#aaa;"></div>
<div class="a" style="left:419px;top:995px;width:4px;height:2px;background:#aaa;"></div>
<div class="a" style="left:43px;top:803px;width:444px;height:151px;background:transparent;border:3px solid #f53b3b"></div>
</body></html>
